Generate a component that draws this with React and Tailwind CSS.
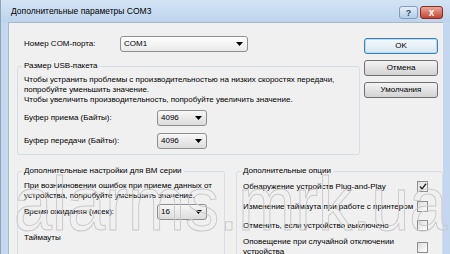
import React from 'react';

const Combo = ({ value, className }) => (
  <div
    className={`flex items-center h-[16px] border border-[#8e8f8f] rounded-[3px] bg-gradient-to-b from-[#f7f7f7] to-[#dcdcdc] pl-[3px] pr-[4px] ${className}`}
  >
    <span className="flex-1 text-black">{value}</span>
    <svg width="7" height="4" viewBox="0 0 7 4">
      <path d="M0 0h7L3.5 4z" fill="#000" />
    </svg>
  </div>
);

const Btn = ({ children, focused }) => (
  <div
    className={
      focused
        ? 'h-[16px] w-[74px] flex items-center justify-center rounded-[3px] border border-[#3c7fb1] bg-gradient-to-b from-[#f4f9fc] to-[#d9e7f1] shadow-[inset_0_0_0_1px_#b5dcf5]'
        : 'h-[16px] w-[74px] flex items-center justify-center rounded-[3px] border border-[#707070] bg-gradient-to-b from-[#f4f4f4] to-[#d2d2d2]'
    }
  >
    {children}
  </div>
);

const Check = ({ checked }) => (
  <div className="w-[11px] h-[11px] border border-[#8f8f8f] bg-gradient-to-br from-[#dcdcdc] to-[#ffffff] flex items-center justify-center">
    {checked && (
      <svg width="8" height="7" viewBox="0 0 8 7">
        <path d="M1 3.5L3 6L7 0.8" stroke="#2a2a2a" strokeWidth="1.4" fill="none" />
      </svg>
    )}
  </div>
);

const Legend = ({ children }) => (
  <legend className="px-[2px] -ml-[2px] leading-[12px]">{children}</legend>
);

export default function App() {
  return (
    <div
      className="relative w-[450px] h-[254px] overflow-hidden bg-[#c3d8ee] text-[8px] leading-[10px] text-black"
      style={{ fontFamily: '"Liberation Sans", Arial, sans-serif' }}
    >
      {/* title bar */}
      <div className="h-[22px] flex items-center pl-[10px] bg-gradient-to-b from-[#d3e3f3] to-[#bdd4ec] border-l border-[#8ea4bb]">
        <span className="flex-1 text-[8.5px]">Дополнительные параметры COM3</span>
        <div className="flex items-start self-start mt-[6px] mr-[7px] gap-[2px]">
          <div className="w-[19px] h-[13px] rounded-[3px] border border-[#7f9db9] bg-gradient-to-b from-[#e6eff8] to-[#b4cde6] flex items-center justify-center text-[9px] font-bold text-[#34495e]">
            ?
          </div>
          <div className="w-[23px] h-[13px] rounded-[3px] border border-[#8a2a20] bg-gradient-to-b from-[#e9a99b] to-[#c1402f] flex items-center justify-center text-[10px] font-bold text-white">
            x
          </div>
        </div>
      </div>

      {/* frame + content */}
      <div className="flex h-[232px] border-l border-[#8ea4bb]">
        <div className="w-[7px]" />
        <div className="w-[435px] bg-[#f0f0f0] border-t border-l border-[#a7b8c9]">
          {/* top section */}
          <div className="flex">
            <div className="ml-[8px] w-[343px]">
              <div className="flex items-center h-[17px] mt-[12px]">
                <span className="w-[103px] pl-[7px]">Номер COM-порта:</span>
                <Combo value="COM1" className="w-[128px] bg-gradient-to-b from-[#ffffff] to-[#e9e9e9]" />
              </div>
              <fieldset className="mt-[8px] h-[95px] border border-[#d5dfe5] rounded-[3px] pl-[6px]">
                <Legend>Размер USB-пакета</Legend>
                <div className="pt-[3px]">
                  <div>Чтобы устранить проблемы с производительностью на низких скоростях передачи,</div>
                  <div>попробуйте уменьшить значение.</div>
                  <div>Чтобы увеличить производительность, попробуйте увеличить значение.</div>
                </div>
                <div className="flex items-center mt-[5px]">
                  <span className="w-[133px]">Буфер приема (Байты):</span>
                  <Combo value="4096" className="w-[50px]" />
                </div>
                <div className="flex items-center mt-[7px]">
                  <span className="w-[133px]">Буфер передачи (Байты):</span>
                  <Combo value="4096" className="w-[50px]" />
                </div>
              </fieldset>
            </div>
            <div className="ml-[4px] mt-[15px] flex flex-col gap-[6px]">
              <Btn focused>OK</Btn>
              <Btn>Отмена</Btn>
              <Btn>Умолчания</Btn>
            </div>
          </div>

          {/* bottom section */}
          <div className="flex mt-[10px]">
            <fieldset className="ml-[8px] w-[208px] h-[120px] border border-[#d5dfe5] rounded-[3px] pl-[6px]">
              <Legend>Дополнительные настройки для BM серии</Legend>
              <div className="pt-[4px]">
                <div>При возникновении ошибок при приеме данных от</div>
                <div>устройства, попробуйте уменьшить значение.</div>
              </div>
              <div className="flex items-center mt-[3px]">
                <span className="w-[133px]">Время ожидания (мсек):</span>
                <Combo value="16" className="w-[50px]" />
              </div>
              <div className="mt-[13px]">Таймауты</div>
            </fieldset>
            <fieldset className="ml-[11px] flex-1 h-[120px] border border-[#d5dfe5] rounded-[3px] pl-[6px] pr-[14px]">
              <Legend>Дополнительные опции</Legend>
              <div className="flex items-center justify-between mt-[4px]">
                <span>Обнаружение устройств Plug-and-Play</span>
                <Check checked />
              </div>
              <div className="flex items-center justify-between mt-[9px]">
                <span>Изменение таймаута при работе с принтером</span>
                <Check />
              </div>
              <div className="flex items-center justify-between mt-[8px]">
                <span>Отменить, если устройство выключено</span>
                <Check />
              </div>
              <div className="flex items-center justify-between mt-[6px]">
                <span>
                  Оповещение при случайной отключении
                  <br />
                  устройства
                </span>
                <Check />
              </div>
            </fieldset>
          </div>
        </div>
      </div>

      {/* watermark */}
      <div className="pointer-events-none absolute left-[14px] top-[166px] origin-left scale-x-[0.9] text-[76px] leading-[76px] text-transparent [-webkit-text-stroke:1px_#c9c9c9] whitespace-nowrap">
        alarms.mrk.ua
      </div>
    </div>
  );
}
